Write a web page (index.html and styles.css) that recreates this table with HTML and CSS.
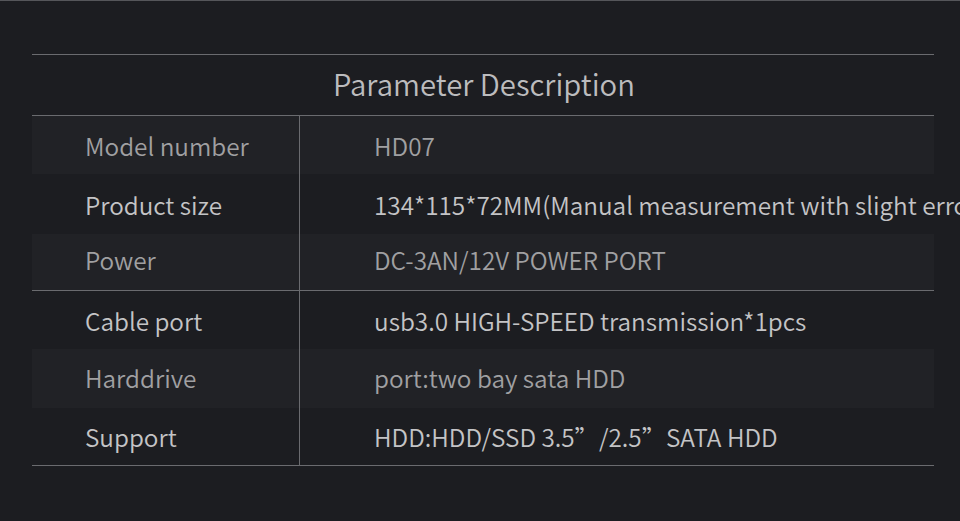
FILE: index.html
```html
<!DOCTYPE html>
<html>
<head>
<meta charset="utf-8">
<link rel="stylesheet" href="styles.css">
</head>
<body>
<div class="page">
  <div class="spec">
    <div class="title">Parameter Description</div>
    <div class="rows">
      <div class="row alt h58"><div class="label">Model number</div><div class="value">HD07</div></div>
      <div class="row h60"><div class="label">Product size</div><div class="value">134*115*72MM(Manual measurement with slight error)</div></div>
      <div class="row alt h56 split"><div class="label">Power</div><div class="value">DC-3AN/12V POWER PORT</div></div>
      <div class="row h58"><div class="label">Cable port</div><div class="value">usb3.0 HIGH-SPEED transmission*1pcs</div></div>
      <div class="row alt h59"><div class="label">Harddrive</div><div class="value">port:two bay sata HDD</div></div>
      <div class="row h57"><div class="label">Support</div><div class="value">HDD:HDD/SSD 3.5”/2.5”SATA HDD</div></div>
    </div>
  </div>
</div>
</body>
</html>
```
FILE: styles.css
```css
html, body {
  margin: 0;
  padding: 0;
  background: #1c1d21;
  overflow: hidden;
}
body {
  width: 960px;
  height: 521px;
  border-top: 1px solid #55565a;
  box-sizing: border-box;
  font-family: "Noto Sans CJK SC", "Noto Sans", sans-serif;
  font-weight: 350;
}
.page {
  padding: 53px 0 0 32px;
}
.spec {
  width: 902px;
  border-top: 1px solid #6a6b6f;
}
.title {
  height: 60px;
  display: flex;
  align-items: center;
  justify-content: center;
  font-size: 29.3px;
  color: #bcbcbe;
  padding-left: 2px;
  padding-bottom: 4px;
  box-sizing: border-box;
}
.rows {
  border-top: 1px solid #6a6b6f;
  border-bottom: 1px solid #6a6b6f;
}
.row {
  display: grid;
  grid-template-columns: 268px 1fr;
  font-size: 24.3px;
  color: #c4c4c6;
  box-sizing: border-box;
}
.row.alt {
  background: #212226;
  color: #a0a0a2;
}
.row.split {
  border-bottom: 1px solid #6a6b6f;
  padding-bottom: 5px;
  box-sizing: content-box;
  height: 51px;
}
.h57 { height: 57px; padding-bottom: 1px; }
.h58 { height: 58px; }
.h59 { height: 59px; padding-bottom: 3px; }
.h60 { height: 60px; }
.label {
  border-right: 1px solid #6a6b6f;
  padding-left: 53px;
  display: flex;
  align-items: center;
}
.split .label {
  margin-bottom: -5px;
  padding-bottom: 5px;
}
.h59 .label {
  margin-bottom: -3px;
  padding-bottom: 3px;
}
.h57 .label {
  margin-bottom: -1px;
  padding-bottom: 1px;
}
.value {
  padding-left: 74px;
  display: flex;
  align-items: center;
  white-space: nowrap;
}
```
